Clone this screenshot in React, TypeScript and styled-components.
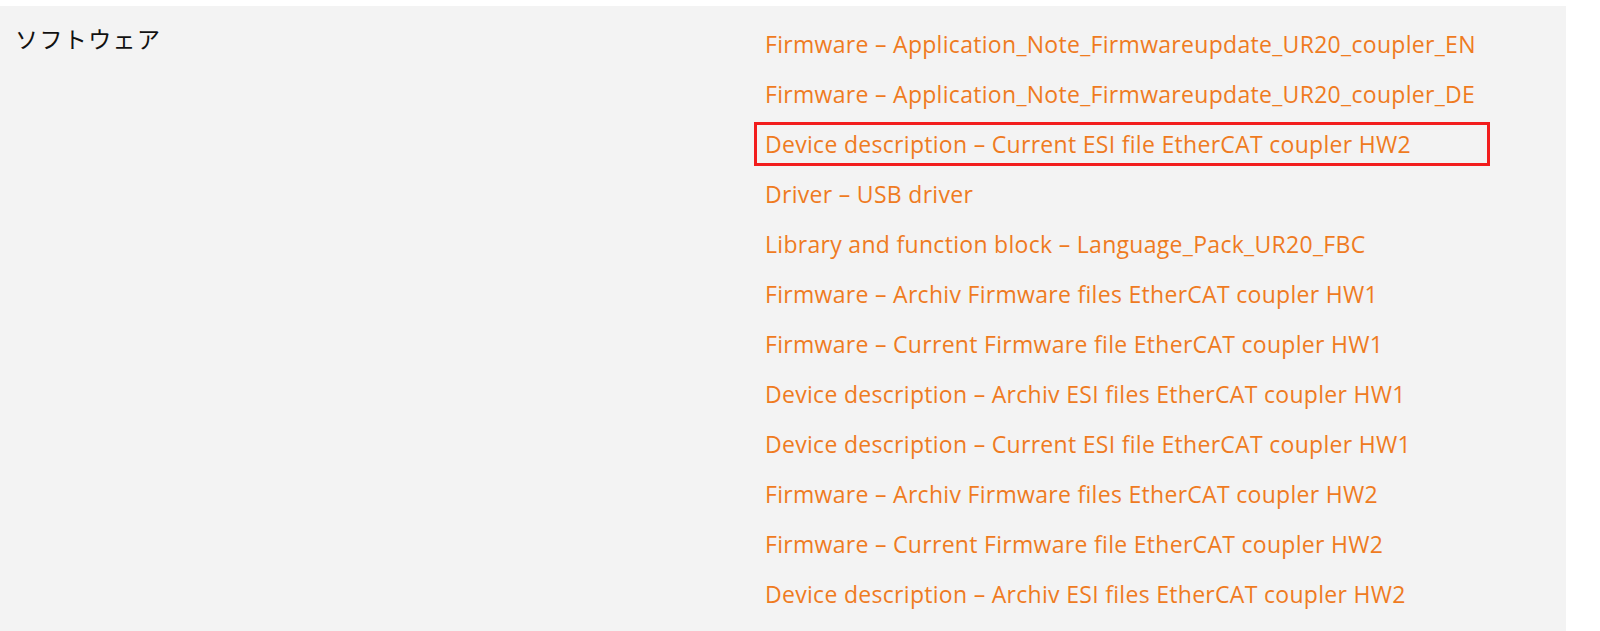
import styled, { createGlobalStyle } from "styled-components";

const GlobalStyle = createGlobalStyle`
  html, body {
    margin: 0;
    padding: 0;
    background-color: #ffffff;
  }
`;

const Page = styled.div`
  padding-top: 6px;
  width: 1566px;
  height: 625px;
  overflow: hidden;
`;

const DownloadPanel = styled.section`
  display: flex;
  height: 100%;
  padding: 13px 0 0 15px;
  box-sizing: border-box;
  background-color: #f3f3f3;
`;

const SectionLabel = styled.div`
  width: 739px;
  padding-top: 3px;
  font-family: "Noto Sans CJK JP", "Noto Sans", sans-serif;
  font-size: 23px;
  line-height: 32px;
  letter-spacing: 1.4px;
  color: #111111;
`;

const LinkList = styled.ul`
  display: flex;
  flex-direction: column;
  gap: 6px;
  list-style: none;
  margin: 0;
  padding: 3px 0 0;
  width: 736px;
`;

const LinkItem = styled.li<{ $highlighted?: boolean }>`
  display: flex;
  align-items: center;
  flex: 0 0 44px;
  padding: 0 11px;
  box-sizing: border-box;
  box-shadow: ${(p) => (p.$highlighted ? "inset 0 0 0 3px #f21d1d" : "none")};
`;

const DownloadLink = styled.a`
  font-family: "Open Sans", "Liberation Sans", sans-serif;
  font-size: 23px;
  letter-spacing: 0.3px;
  color: #ef7b1f;
  text-decoration: none;
  white-space: nowrap;
  cursor: pointer;
`;

const downloads = [
  "Firmware – Application_Note_Firmwareupdate_UR20_coupler_EN",
  "Firmware – Application_Note_Firmwareupdate_UR20_coupler_DE",
  "Device description – Current ESI file EtherCAT coupler HW2",
  "Driver – USB driver",
  "Library and function block – Language_Pack_UR20_FBC",
  "Firmware – Archiv Firmware files EtherCAT coupler HW1",
  "Firmware – Current Firmware file EtherCAT coupler HW1",
  "Device description – Archiv ESI files EtherCAT coupler HW1",
  "Device description – Current ESI file EtherCAT coupler HW1",
  "Firmware – Archiv Firmware files EtherCAT coupler HW2",
  "Firmware – Current Firmware file EtherCAT coupler HW2",
  "Device description – Archiv ESI files EtherCAT coupler HW2",
];

const App = () => {
  return (
    <>
      <GlobalStyle />
      <Page>
        <DownloadPanel>
          <SectionLabel>ソフトウェア</SectionLabel>
          <LinkList>
            {downloads.map((name, i) => (
              <LinkItem key={name} $highlighted={i === 2}>
                <DownloadLink>{name}</DownloadLink>
              </LinkItem>
            ))}
          </LinkList>
        </DownloadPanel>
      </Page>
    </>
  );
};

export default App;
